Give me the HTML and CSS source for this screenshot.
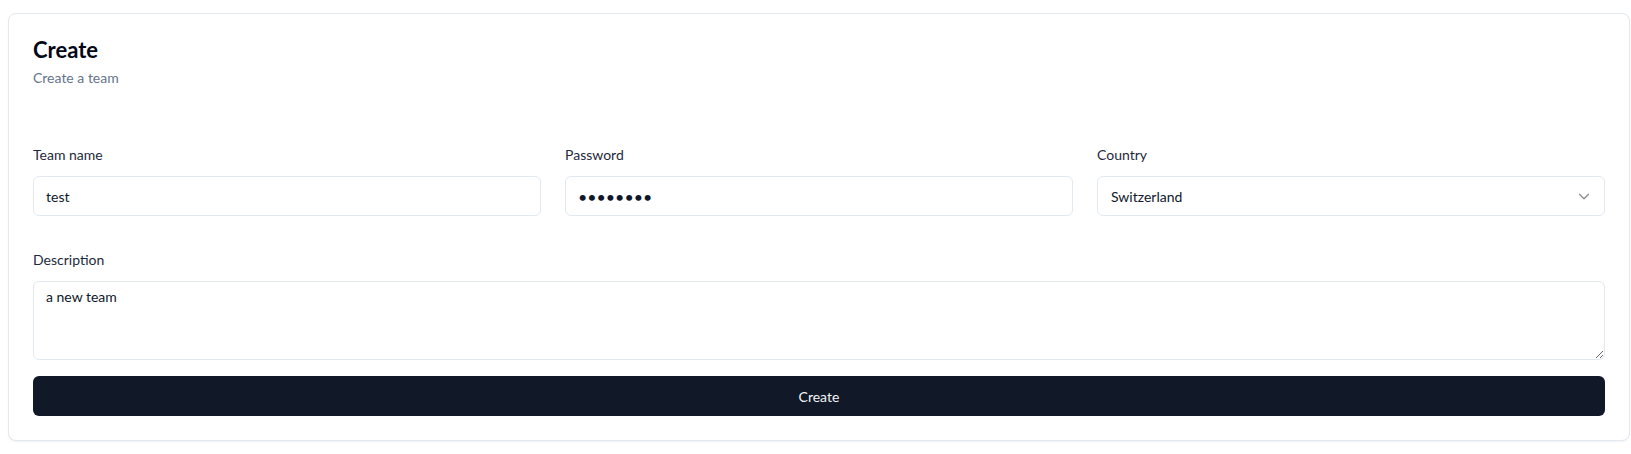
FILE: index.html
```html
<!DOCTYPE html>
<html lang="en">
<head>
<meta charset="utf-8">
<title>Create a team</title>
<link rel="stylesheet" href="styles.css">
</head>
<body>
<div class="page">
  <div class="card">
    <div class="card-header">
      <h1 class="card-title">Create</h1>
      <p class="card-desc">Create a team</p>
    </div>
    <form class="form">
      <div class="row">
        <div class="field">
          <label class="label" for="name">Team name</label>
          <input class="input" id="name" type="text" value="test">
        </div>
        <div class="field">
          <label class="label" for="pw">Password</label>
          <input class="input input-pw" id="pw" type="password" value="12345678">
        </div>
        <div class="field">
          <label class="label" for="country">Country</label>
          <div class="select" id="country">
            <span>Switzerland</span>
            <svg class="chevron" width="12" height="7" viewBox="0 0 12 7" fill="none" stroke="currentColor" stroke-width="1.3" stroke-linecap="round" stroke-linejoin="round"><path d="M1.5 1.2l4.5 4.5 4.5-4.5"/></svg>
          </div>
        </div>
      </div>
      <div class="field field-desc">
        <label class="label" for="desc">Description</label>
        <textarea class="textarea" id="desc">a new team</textarea>
      </div>
      <button class="button" type="button">Create</button>
    </form>
  </div>
</div>
</body>
</html>
```
FILE: styles.css
```css
* { box-sizing: border-box; }
html, body { margin: 0; padding: 0; background: #ffffff; }
body {
  font-family: Lato, "Noto Sans", "Liberation Sans", sans-serif;
  color: #0f172a;
}
.page { padding: 13px 1px 13px 8px; }
.card {
  border: 1px solid #e2e8f0;
  border-radius: 8px;
  padding: 24px;
  background: #fff;
  box-shadow: 0 1px 2px rgba(15, 23, 42, 0.05);
}
.card-header { display: flex; flex-direction: column; }
.card-title {
  margin: 0;
  font-size: 22px;
  line-height: 24px;
  font-weight: 700;
  color: #020817;
}
.card-desc {
  margin: 6px 0 0;
  font-size: 14px;
  line-height: 20px;
  color: #64748b;
}
.form { display: flex; flex-direction: column; margin-top: 57px; }
.row {
  display: grid;
  grid-template-columns: repeat(3, 1fr);
  column-gap: 24px;
}
.field { display: flex; flex-direction: column; gap: 11px; }
.field-desc { margin-top: 34px; }
.label {
  font-size: 14px;
  line-height: 20px;
  font-weight: 400;
  color: #1e293b;
}
.input, .select, .textarea {
  font-family: inherit;
  font-size: 14px;
  color: #0f172a;
  border: 1px solid #e2e8f0;
  border-radius: 6px;
  background: #fff;
  width: 100%;
}
.input {
  height: 40px;
  padding: 0 12px;
  outline: none;
}
.input-pw { font-size: 16px; letter-spacing: 0; }
.select {
  height: 40px;
  padding: 0 14px 0 13px;
  display: flex;
  align-items: center;
  justify-content: space-between;
}
.chevron { color: #8a8f98; }
.textarea {
  height: 79px;
  padding: 7px 12px;
  line-height: 16px;
  resize: vertical;
  outline: none;
  display: block;
}
.button {
  margin-top: 16px;
  height: 40px;
  border: 0;
  border-radius: 6px;
  background: #111827;
  color: #f1f5f9;
  font-family: inherit;
  font-size: 14px;
  font-weight: 400;
  cursor: pointer;
}
```
